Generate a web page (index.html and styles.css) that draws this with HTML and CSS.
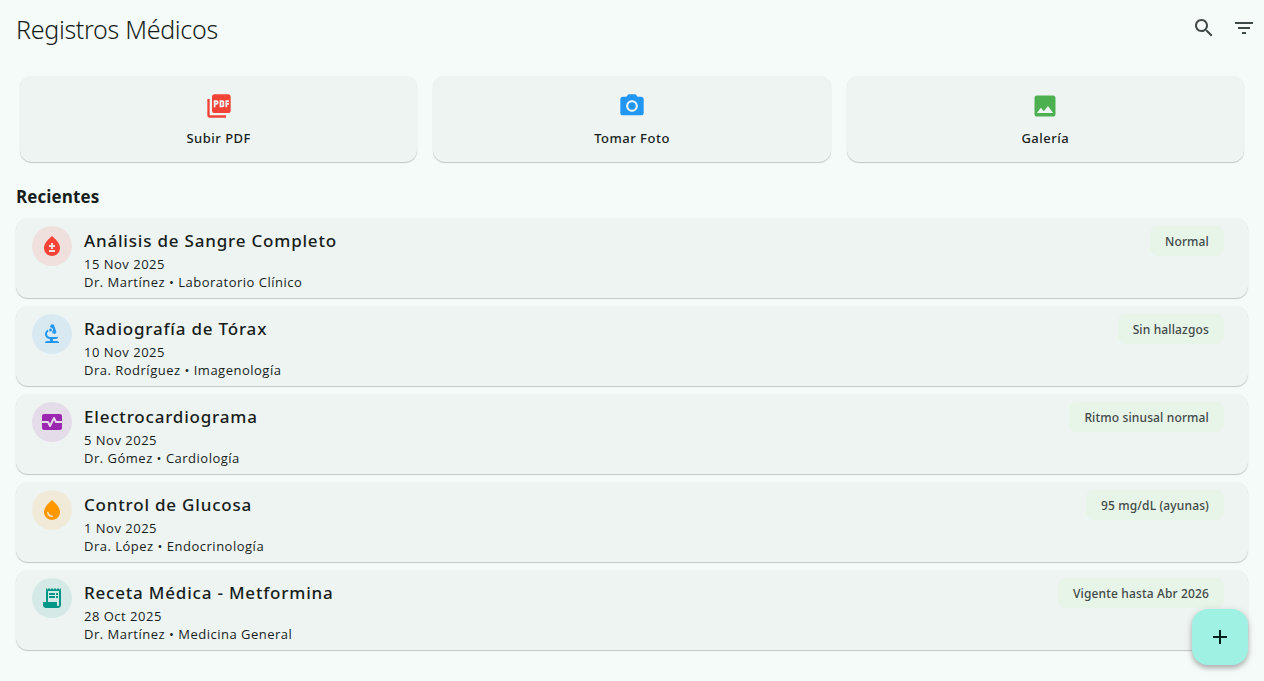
FILE: index.html
```html
<!DOCTYPE html>
<html lang="es">
<head>
    <meta charset="UTF-8">
    <meta name="viewport" content="width=device-width, initial-scale=1.0">
    <title>Registros Médicos</title>
    <link rel="stylesheet" href="styles.css">
</head>
<body>
    <header class="app-bar">
        <h1>Registros Médicos</h1>
        <div class="app-actions">
            <button class="icon-button" aria-label="Buscar">
                <svg viewBox="0 0 24 24"><path d="M15.5 14h-.79l-.28-.27C15.41 12.59 16 11.11 16 9.5 16 5.91 13.09 3 9.5 3S3 5.91 3 9.5 5.91 16 9.5 16c1.61 0 3.09-.59 4.23-1.57l.27.28v.79l5 4.99L20.49 19l-4.99-5zm-6 0C7.01 14 5 11.99 5 9.5S7.01 5 9.5 5 14 7.01 14 9.5 11.99 14 9.5 14z"/></svg>
            </button>
            <button class="icon-button" aria-label="Filtrar">
                <svg viewBox="0 0 24 24"><path d="M10 18h4v-2h-4v2zM3 6v2h18V6H3zm3 7h12v-2H6v2z"/></svg>
            </button>
        </div>
    </header>

    <!-- Upload options -->
    <section class="upload-options">
        <button class="card upload-card">
            <svg class="red" viewBox="0 0 24 24"><path d="M20 2H8c-1.1 0-2 .9-2 2v12c0 1.1.9 2 2 2h12c1.1 0 2-.9 2-2V4c0-1.1-.9-2-2-2zm-8.5 7.5c0 .83-.67 1.5-1.5 1.5H9v2H7.5V7H10c.83 0 1.5.67 1.5 1.5v1zm5 2c0 .83-.67 1.5-1.5 1.5h-2.5V7H15c.83 0 1.5.67 1.5 1.5v3zm4-3H19v1h1.5V11H19v2h-1.5V7h3v1.5zM9 9.5h1v-1H9v1zM4 6H2v14c0 1.1.9 2 2 2h14v-2H4V6zm10 5.5h1v-3h-1v3z"/></svg>
            <span>Subir PDF</span>
        </button>
        <button class="card upload-card">
            <svg class="blue" viewBox="0 0 24 24"><circle cx="12" cy="12" r="3.2"/><path d="M9 2L7.17 4H4c-1.1 0-2 .9-2 2v12c0 1.1.9 2 2 2h16c1.1 0 2-.9 2-2V6c0-1.1-.9-2-2-2h-3.17L15 2H9zm3 15c-2.76 0-5-2.24-5-5s2.24-5 5-5 5 2.24 5 5-2.24 5-5 5z"/></svg>
            <span>Tomar Foto</span>
        </button>
        <button class="card upload-card">
            <svg class="green" viewBox="0 0 24 24"><path d="M21 19V5c0-1.1-.9-2-2-2H5c-1.1 0-2 .9-2 2v14c0 1.1.9 2 2 2h14c1.1 0 2-.9 2-2zM8.5 13.5l2.5 3.01L14.5 12l4.5 6H5l3.5-4.5z"/></svg>
            <span>Galería</span>
        </button>
    </section>

    <!-- Recent records -->
    <main class="records">
        <h2>Recientes</h2>

        <article class="card record">
            <div class="avatar red">
                <svg viewBox="0 0 24 24"><path d="M12 2c-5.33 4.55-8 8.48-8 11.8 0 4.98 3.8 8.2 8 8.2s8-3.22 8-8.2c0-3.32-2.67-7.25-8-11.8zm3 16H9v-2h6v2zm0-5h-2v2h-2v-2H9v-2h2V9h2v2h2v2z"/></svg>
            </div>
            <div class="record-info">
                <h3>Análisis de Sangre Completo</h3>
                <p>15 Nov 2025</p>
                <p>Dr. Martínez • Laboratorio Clínico</p>
            </div>
            <span class="chip">Normal</span>
        </article>

        <article class="card record">
            <div class="avatar blue">
                <svg viewBox="0 0 24 24"><path d="M7 19c-1.1 0-2 .9-2 2h14c0-1.1-.9-2-2-2h-4v-2h3c1.1 0 2-.9 2-2h-8c-1.66 0-3-1.34-3-3 0-1.09.59-2.04 1.46-2.56C8.17 9.03 8 8.54 8 8c0-.21.04-.42.09-.62C6.28 8.13 5 9.92 5 12c0 2.76 2.24 5 5 5v2H7z"/><path d="M10.56 5.51C11.91 5.54 13 6.64 13 8c0 .75-.33 1.41-.85 1.87l.59 1.62.94-.34.34.94 1.88-.68-.34-.94.94-.34-2.74-7.52-.94.34-.34-.94-1.88.68.34.94-.94.35.56 1.53z"/><circle cx="10.5" cy="8" r="1.5"/></svg>
            </div>
            <div class="record-info">
                <h3>Radiografía de Tórax</h3>
                <p>10 Nov 2025</p>
                <p>Dra. Rodríguez • Imagenología</p>
            </div>
            <span class="chip">Sin hallazgos</span>
        </article>

        <article class="card record">
            <div class="avatar purple">
                <svg viewBox="0 0 24 24"><path d="M15.11 12.45L14 10.24l-3.11 6.21c-.16.34-.51.55-.89.55s-.73-.21-.89-.55L7.38 13H2v5c0 1.1.9 2 2 2h16c1.1 0 2-.9 2-2v-5h-6c-.38 0-.73-.21-.89-.55z"/><path d="M20 4H4c-1.1 0-2 .9-2 2v5h6c.38 0 .73.21.89.55L10 13.76l3.11-6.21c.34-.68 1.45-.68 1.79 0L16.62 11H22V6c0-1.1-.9-2-2-2z"/></svg>
            </div>
            <div class="record-info">
                <h3>Electrocardiograma</h3>
                <p>5 Nov 2025</p>
                <p>Dr. Gómez • Cardiología</p>
            </div>
            <span class="chip">Ritmo sinusal normal</span>
        </article>

        <article class="card record">
            <div class="avatar orange">
                <svg viewBox="0 0 24 24"><path d="M12 2c-5.33 4.55-8 8.48-8 11.8 0 4.98 3.8 8.2 8 8.2s8-3.22 8-8.2c0-3.32-2.67-7.25-8-11.8zM7.83 14c.37 0 .67.26.74.62.41 2.22 2.28 2.98 3.64 2.87.43-.02.79.32.79.75 0 .4-.32.73-.72.75-2.13.13-4.62-1.09-5.19-4.12-.08-.45.28-.87.74-.87z"/></svg>
            </div>
            <div class="record-info">
                <h3>Control de Glucosa</h3>
                <p>1 Nov 2025</p>
                <p>Dra. López • Endocrinología</p>
            </div>
            <span class="chip">95 mg/dL (ayunas)</span>
        </article>

        <article class="card record">
            <div class="avatar teal">
                <svg viewBox="0 0 24 24"><path d="M19.5 3.5L18 2l-1.5 1.5L15 2l-1.5 1.5L12 2l-1.5 1.5L9 2 7.5 3.5 6 2v14H3v3c0 1.66 1.34 3 3 3h12c1.66 0 3-1.34 3-3V2l-1.5 1.5zM19 19c0 .55-.45 1-1 1s-1-.45-1-1v-3H8V5h11v14z"/><path d="M9 7h6v2H9zM16 7h2v2h-2zM9 10h6v2H9zM16 10h2v2h-2z"/></svg>
            </div>
            <div class="record-info">
                <h3>Receta Médica - Metformina</h3>
                <p>28 Oct 2025</p>
                <p>Dr. Martínez • Medicina General</p>
            </div>
            <span class="chip">Vigente hasta Abr 2026</span>
        </article>
    </main>

    <button class="fab" aria-label="Agregar registro">
        <svg viewBox="0 0 24 24"><path d="M19 13h-6v6h-2v-6H5v-2h6V5h2v6h6v2z"/></svg>
    </button>
</body>
</html>
```
FILE: styles.css
```css
* {
    box-sizing: border-box;
    margin: 0;
    padding: 0;
}

body {
    font-family: "Open Sans", "Noto Sans", sans-serif;
    background-color: #f5fbf9;
    color: #171d1b;
    height: 100vh;
    overflow: hidden;
}

button {
    font-family: inherit;
    color: inherit;
    border: none;
    cursor: pointer;
}

svg {
    display: block;
    width: 24px;
    height: 24px;
    fill: currentColor;
}

.app-bar {
    display: flex;
    justify-content: space-between;
    height: 56px;
    padding-left: 16px;
}

h1 {
    font-family: "Noto Sans", sans-serif;
    font-size: 25px;
    font-weight: 350;
    line-height: 59px;
    letter-spacing: -0.3px;
}

.app-actions {
    display: flex;
    align-items: center;
}

.icon-button {
    width: 40px;
    height: 40px;
    padding: 8px;
    background: none;
    color: #3f4947;
}

.card {
    background-color: #eef4f2;
    border-radius: 12px;
    box-shadow: 0 1px 1px rgba(0, 0, 0, 0.2), 0 0 1px rgba(0, 0, 0, 0.08);
}

.upload-options {
    display: flex;
    gap: 16px;
    padding: 20px 20px 0;
}

.upload-card {
    flex: 1;
    display: flex;
    flex-direction: column;
    align-items: center;
    gap: 8px;
    height: 86px;
    padding-top: 16px;
    font-family: "Noto Sans", sans-serif;
    font-size: 13px;
    font-weight: 500;
    line-height: 20px;
    letter-spacing: 0.5px;
}

.upload-card svg {
    width: 28px;
    height: 28px;
}

.upload-card span {
    color: #171d1b;
}

.records {
    padding: 24px 16px 0;
}

h2 {
    font-size: 17px;
    font-weight: 700;
    line-height: 22px;
    letter-spacing: 0.1px;
    margin-bottom: 10px;
}

.record {
    display: flex;
    align-items: flex-start;
    height: 80px;
    padding: 8px 24px 8px 16px;
    margin-bottom: 8px;
}

.avatar {
    display: flex;
    align-items: center;
    justify-content: center;
    width: 40px;
    height: 40px;
    margin-right: 12px;
    border-radius: 50%;
}

.record-info {
    flex: 1;
}

h3 {
    font-family: "Noto Sans", sans-serif;
    font-size: 17px;
    font-weight: 500;
    line-height: 29px;
    letter-spacing: 0.8px;
}

.record-info p {
    font-size: 13px;
    line-height: 18px;
    letter-spacing: 0.5px;
}

.chip {
    height: 30px;
    padding: 1px 15px 0;
    border-radius: 8px;
    background-color: #e7f4e8;
    color: #3f4947;
    font-family: "Noto Sans", sans-serif;
    font-size: 12px;
    font-weight: 500;
    line-height: 29px;
    letter-spacing: 0.14px;
}

.red { color: #f44336; }
.blue { color: #2196f3; }
.green { color: #4caf50; }
.purple { color: #9c27b0; }
.orange { color: #ff9800; }
.teal { color: #009688; }

.avatar.red { background-color: #efe0dd; }
.avatar.blue { background-color: #d9e9f2; }
.avatar.purple { background-color: #e5dcea; }
.avatar.orange { background-color: #f1ead9; }
.avatar.teal { background-color: #d5eae6; }

/* Floating action button */
.fab {
    position: fixed;
    right: 16px;
    bottom: 16px;
    width: 56px;
    height: 56px;
    padding: 16px;
    border-radius: 16px;
    background-color: #9ff2e3;
    color: #00201c;
    box-shadow: 0 3px 5px rgba(0, 0, 0, 0.22), 0 2px 9px rgba(0, 0, 0, 0.14);
}
```
